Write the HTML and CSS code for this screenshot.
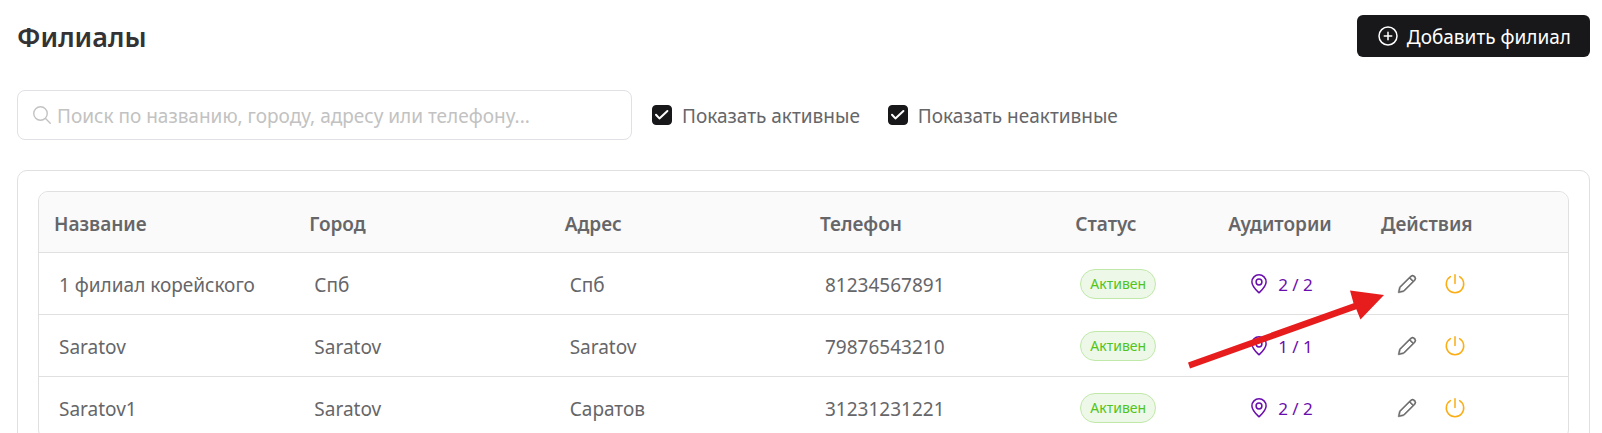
FILE: index.html
```
<!DOCTYPE html>
<html lang="ru">
<head>
<meta charset="utf-8">
<meta name="viewport" content="width=device-width, initial-scale=1">
<title>Филиалы</title>
<link rel="stylesheet" href="styles.css">
</head>
<body>
<svg class="sprite" aria-hidden="true">
  <symbol id="pin" viewBox="0 0 24 24"><path d="M12 20.800C9.600 18.400 4.900 14.200 4.900 9.900a7.100 7.100 0 0 1 14.200 0c0 4.300-4.700 8.500-7.100 10.900z"/><circle cx="12" cy="10" r="2.900"/></symbol>
  <symbol id="pencil" viewBox="0 0 20 20"><path class="solid" d="M17.181 2.927a2.975 2.975 0 0 0-4.259-.054l-9.375 9.375a2.44 2.44 0 0 0-.656 1.194l-.878 3.950a.5.5 0 0 0 .597.597l3.926-.873a2.518 2.518 0 0 0 1.234-.678l9.358-9.358a2.975 2.975 0 0 0 .053-4.153zm-3.550.654a1.975 1.975 0 1 1 2.793 2.793l-.671.671-2.793-2.793.671-.671zm-1.378 1.378l2.793 2.793-7.980 7.980a1.518 1.518 0 0 1-.744.409l-3.160.702.708-3.183c.059-.267.193-.511.386-.704l7.997-7.997z"/></symbol>
  <symbol id="power" viewBox="0 0 24 24"><path d="M16.600 4.600a8.700 8.700 0 1 1-9.200 0M12 2.800v8.700"/></symbol>
</svg>
<main class="page">
  <header class="top">
    <h1 class="title">Филиалы</h1>
    <button class="add" type="button">
      <svg class="icon" viewBox="0 0 512 512" aria-hidden="true"><path class="wide" d="M448 256c0-106-86-192-192-192S64 150 64 256s86 192 192 192 192-86 192-192zM256 176v160M336 256H176"/></svg>
      <span class="label">Добавить филиал</span>
    </button>
  </header>
  <div class="filters">
    <div class="search">
      <svg class="search-icon" viewBox="0 0 512 512" aria-hidden="true"><path class="wide" d="M221.090 64a157.090 157.090 0 1 0 157.090 157.090A157.100 157.100 0 0 0 221.090 64zM338.290 338.290L448 448"/></svg>
      <input class="search-input" type="text" aria-label="Поиск" placeholder="Поиск по названию, городу, адресу или телефону...">
    </div>
    <label class="check"><span class="box"><input class="tick" type="checkbox" checked><svg class="mark" viewBox="0 0 20 20" aria-hidden="true"><path d="M4 9.700l3.400 3.700 8-7.400"/></svg></span><span class="label">Показать активные</span></label>
    <label class="check"><span class="box"><input class="tick" type="checkbox" checked><svg class="mark" viewBox="0 0 20 20" aria-hidden="true"><path d="M4 9.700l3.400 3.700 8-7.400"/></svg></span><span class="label">Показать неактивные</span></label>
  </div>
  <section class="card">
    <div class="frame">
      <table class="table">
        <colgroup><col class="c-text"><col class="c-text"><col class="c-text"><col class="c-text"><col class="c-small"><col class="c-small"><col></colgroup>
        <thead>
          <tr><th>Название</th><th>Город</th><th>Адрес</th><th>Телефон</th><th>Статус</th><th>Аудитории</th><th>Действия</th></tr>
        </thead>
        <tbody>
          <tr>
            <td>1 филиал корейского</td><td>Спб</td><td>Спб</td><td>81234567891</td>
            <td class="plain"><span class="tag">Активен</span></td>
            <td class="plain"><button class="rooms" type="button"><svg class="icon" aria-hidden="true"><use href="#pin"/></svg><span class="label">2 / 2</span></button></td>
            <td class="plain"><div class="actions"><button class="act" type="button" aria-label="Изменить"><svg class="pencil" aria-hidden="true"><use href="#pencil"/></svg></button><button class="act off" type="button" aria-label="Отключить"><svg class="icon" aria-hidden="true"><use href="#power"/></svg></button></div></td>
          </tr>
          <tr>
            <td>Saratov</td><td>Saratov</td><td>Saratov</td><td>79876543210</td>
            <td class="plain"><span class="tag">Активен</span></td>
            <td class="plain"><button class="rooms" type="button"><svg class="icon" aria-hidden="true"><use href="#pin"/></svg><span class="label">1 / 1</span></button></td>
            <td class="plain"><div class="actions"><button class="act" type="button" aria-label="Изменить"><svg class="pencil" aria-hidden="true"><use href="#pencil"/></svg></button><button class="act off" type="button" aria-label="Отключить"><svg class="icon" aria-hidden="true"><use href="#power"/></svg></button></div></td>
          </tr>
          <tr>
            <td>Saratov1</td><td>Saratov</td><td>Саратов</td><td>31231231221</td>
            <td class="plain"><span class="tag">Активен</span></td>
            <td class="plain"><button class="rooms" type="button"><svg class="icon" aria-hidden="true"><use href="#pin"/></svg><span class="label">2 / 2</span></button></td>
            <td class="plain"><div class="actions"><button class="act" type="button" aria-label="Изменить"><svg class="pencil" aria-hidden="true"><use href="#pencil"/></svg></button><button class="act off" type="button" aria-label="Отключить"><svg class="icon" aria-hidden="true"><use href="#power"/></svg></button></div></td>
          </tr>
        </tbody>
      </table>
      <svg class="arrow" viewBox="0 0 196 80" aria-hidden="true"><path d="M0 72.500L165.500 13.200 162 0.500 196 5 172.500 29.500 168.300 19.300 2 78.500z"/></svg>
    </div>
  </section>
</main>
</body>
</html>
```

FILE: styles.css
```
* { box-sizing: border-box; }
html, body { height: 100%; }
body {
  margin: 0;
  overflow: hidden;
  background: #fff;
  color: #666669;
  font: 19px/28px "Noto Sans", "Open Sans", sans-serif;
}
button, input { font: inherit; color: inherit; }
button { cursor: pointer; }
.sprite { position: absolute; width: 0; height: 0; }
svg { flex: none; fill: none; stroke: currentColor; stroke-width: 1.5; stroke-linejoin: round; stroke-linecap: round; }
.wide { stroke-width: 32; }
.solid { fill: currentColor; stroke-width: 0.5; }
.icon { width: 24px; height: 24px; }
.label { padding-top: 2px; }
.page { padding: 15px 12px 0 17px; }
.top { display: flex; justify-content: space-between; align-items: center; height: 42px; }
.title { margin: 0; padding-top: 2px; color: #333336; font-size: 27px; line-height: 42px; font-weight: 600; }
.add {
  display: flex; align-items: center; gap: 7px; height: 42px; padding: 0 19px;
  border: 0; border-radius: 6px; background: #18181b; color: #fff;
}
.filters { display: flex; align-items: center; margin-top: 33px; }
.search {
  display: flex; align-items: center; width: 39.1%; height: 50px; padding: 0 13px;
  border: 1px solid #e0e0e6; border-radius: 8px; color: #c2c2c2;
}
.search-icon { width: 22px; height: 22px; }
.search-input { flex: 1; min-width: 0; padding: 2px 4px 0; border: 0; outline: 0; background: none; color: #333336; }
.search-input::placeholder { color: #c2c2c2; opacity: 1; }
.check { display: flex; align-items: center; gap: 10px; margin-left: 20px; }
.check + .check { margin-left: 28px; }
.box { display: grid; width: 20px; height: 20px; }
.tick { grid-area: 1 / 1; appearance: none; width: 20px; height: 20px; margin: 0; border: 1px solid #e0e0e6; border-radius: 4px; }
.tick:checked { border-color: #18181b; background: #18181b; }
.mark { grid-area: 1 / 1; z-index: 1; width: 20px; height: 20px; color: #fff; stroke-width: 2; pointer-events: none; }
.card { margin-top: 30px; padding: 20px; border: 1px solid #e0e0e0; border-radius: 10px; }
.frame { position: relative; border: 1px solid #e0e0e0; border-radius: 10px; }
.table { width: 100%; table-layout: fixed; border-collapse: separate; border-spacing: 0; }
.c-text { width: 16.7%; }
.c-small { width: 10%; }
th, td { padding: 2px 0 0 20px; height: 62px; border-bottom: 1px solid #e0e0e0; text-align: left; white-space: nowrap; }
th { height: 61px; padding: 3px 0 0 15px; background: #fafafa; font-weight: 600; }
th:first-child { border-top-left-radius: 10px; }
th:last-child { border-top-right-radius: 10px; }
.plain { padding-top: 0; }
.tag {
  display: inline-flex; align-items: center; height: 30px; padding: 1px 9px 0;
  border: 1px solid #c0e9a9; border-radius: 15px; background: #edf8e8;
  color: #52c41a; font-size: 14px; line-height: 20px; vertical-align: middle;
}
.rooms { display: flex; align-items: center; gap: 7px; padding: 0 0 0 14px; border: 0; background: none; color: #6a0dad; font-size: 17px; }
.actions { display: flex; align-items: center; gap: 18px; padding-left: 6px; }
.act { display: grid; place-items: center; width: 30px; height: 30px; padding: 0; border: 0; background: none; }
.off { color: #faad14; }
.pencil { width: 22px; height: 22px; }
.arrow { position: absolute; top: 98px; right: 184px; width: 196px; height: 80px; fill: #e71d1d; stroke: none; pointer-events: none; }
```
